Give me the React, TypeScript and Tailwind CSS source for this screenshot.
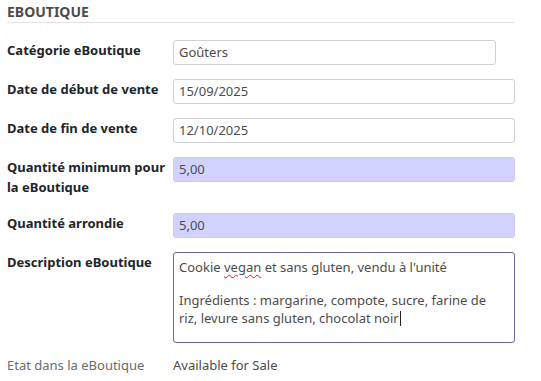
const LABEL = 'text-[13px] leading-[20px] font-bold text-[#212529]'
const INPUT = 'h-[25px] rounded-[3px] border px-[5px] text-[13px] leading-[23px] text-[#4c4c4c]'

export default function App() {
  return (
    <div
      className="w-[541px] h-[381px] bg-white pl-[7px] pt-[4px]"
      style={{ fontFamily: '"Noto Sans", "Open Sans", sans-serif' }}
    >
      {/* SECTION TITLE */}
      <div className="w-[508px] border-b border-[#e2e2e2] pb-[2px] text-[14px] leading-[16px] font-bold text-[#4c4c4c]">
        EBOUTIQUE
      </div>

      <div className="mt-[17px] grid w-[508px] grid-cols-[166px_1fr] gap-y-[14px]">
        <div className={LABEL}>Catégorie eBoutique</div>
        <div className={INPUT + ' w-[323px] border-[#d0d0d0]'}>Goûters</div>

        <div className={LABEL}>Date de début de vente</div>
        <div className={INPUT + ' border-[#d0d0d0]'}>15/09/2025</div>

        <div className={LABEL}>Date de fin de vente</div>
        <div className={INPUT + ' border-[#d0d0d0]'}>12/10/2025</div>

        <div className={LABEL + ' pb-[2px]'}>
          Quantité minimum pour
          <br />
          la eBoutique
        </div>
        <div className={INPUT + ' border-[#c9c9f2] bg-[#d2d2ff]'}>5,00</div>

        <div className={LABEL}>Quantité arrondie</div>
        <div className={INPUT + ' border-[#c9c9f2] bg-[#d2d2ff]'}>5,00</div>

        <div className={LABEL}>Description eBoutique</div>
        <div className="h-[91px] rounded-[3px] border border-[#71639e] px-[5px] pt-[5px] text-[13px] leading-[18.5px] text-[#4c4c4c]">
          <p className="mb-[14px]">
            Cookie{' '}
            <span className="underline decoration-wavy decoration-[#e01b1b] decoration-1 underline-offset-2">
              vegan
            </span>{' '}
            et sans gluten, vendu à l'unité
          </p>
          <p>
            Ingrédients : margarine, compote, sucre, farine de
            <br />
            riz, levure sans gluten, chocolat noir
            <span className="ml-px inline-block h-[15px] w-px bg-[#222] align-[-3px]" />
          </p>
        </div>

        <div className="text-[13px] leading-[16px] text-[#6c6c6c]">Etat dans la eBoutique</div>
        <div className="text-[13px] leading-[16px] text-[#4c4c4c]">Available for Sale</div>
      </div>
    </div>
  )
}
